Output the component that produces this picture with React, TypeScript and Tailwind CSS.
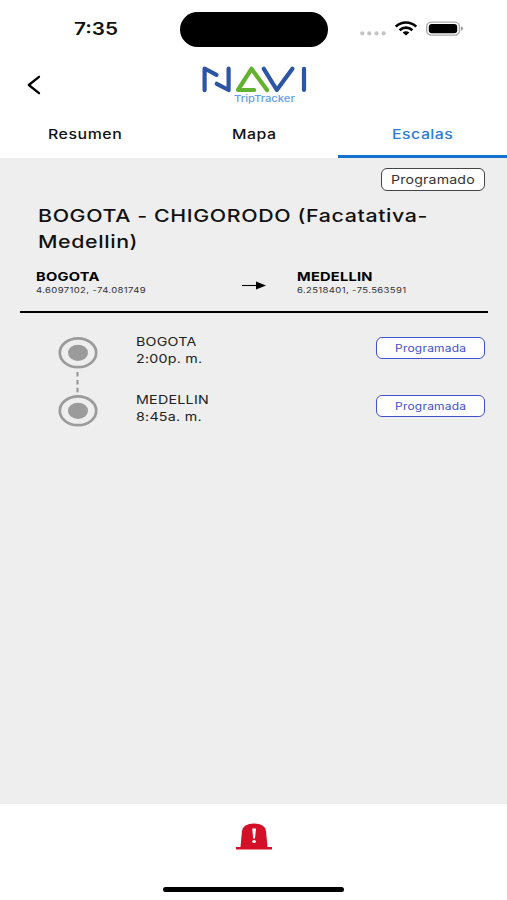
import type { ReactNode } from "react";

// Text widened horizontally, growing from its left edge.
function Wide({ className = "", children }: { className?: string; children: ReactNode }) {
  return (
    <span className={`block w-max origin-left scale-x-[1.22] whitespace-nowrap ${className}`}>
      {children}
    </span>
  );
}

function StatusBar() {
  return (
    <div className="flex h-[58px] shrink-0 items-start">
      <div className="w-[180px] pt-[19px] pl-[74px]">
        <Wide className="text-[17px] leading-5 font-semibold">7:35</Wide>
      </div>
      <div className="mt-3 h-[35px] w-[148px] rounded-full bg-black" />
      <svg className="mt-[18px] ml-[30px]" width="110" height="22" viewBox="0 0 110 22">
        <g fill="#c4c4c4">
          <circle cx="4.3" cy="15.3" r="2.1" />
          <circle cx="11.3" cy="15.3" r="2.1" />
          <circle cx="18.5" cy="15.3" r="2.1" />
          <circle cx="25.7" cy="15.3" r="2.1" />
        </g>
        <g fill="none" stroke="#000" strokeWidth="2.7">
          <path d="M37.8 8.6C43.5 3.1 52.5 3.1 58.2 8.6" />
          <path d="M41.6 12.2C45.4 8.7 50.6 8.7 54.4 12.2" />
        </g>
        <path d="M44.6 14.5C46.6 12.8 49.4 12.8 51.4 14.5L48 17.6Z" />
        <rect x="68.7" y="4.1" width="32.8" height="13" rx="4.5" fill="none" stroke="#aaa" strokeWidth="1.4" />
        <rect x="70.8" y="6" width="28.4" height="9.2" rx="3" />
        <path d="M103 8.4Q105 9 105 10.6T103 12.8Z" fill="#999" />
      </svg>
    </div>
  );
}

function Header() {
  return (
    <div className="flex h-[52px] shrink-0 items-start">
      <svg className="mt-[16px] ml-[26px]" width="16" height="22" viewBox="0 0 16 22">
        <path d="M13 2.8L2.8 11L13 19.2" fill="none" stroke="#000" strokeWidth="2.3" strokeLinecap="round" strokeLinejoin="round" />
      </svg>
      <div className="ml-[160px] pt-[7px]">
        <svg width="106" height="28" viewBox="0 0 106 28" fill="none" strokeWidth="4.2" strokeLinecap="round" strokeLinejoin="round">
          <path d="M2.6 25.2V3.5L14.5 9.8M14.8 18.8L26.6 25V3.5" stroke="#2d55a5" />
          <path d="M61.8 3.8L74.8 25L90.4 3.8M102 3.8V25" stroke="#2d55a5" />
          <path d="M52.2 25H36L49.5 3.8L65 25" stroke="#62b22f" />
        </svg>
        <Wide className="ml-8 text-[9.2px] leading-[13px] font-medium -mt-px text-[#5c9ff0]">TripTracker</Wide>
      </div>
    </div>
  );
}

function Tabs() {
  return (
    <div className="grid h-[48px] shrink-0 grid-cols-3 text-[13px] leading-5 font-medium">
      <div className="pt-[14px] pl-[48px]">
        <Wide className="tracking-[0.45px]">Resumen</Wide>
      </div>
      <div className="pt-[14px] pl-[63px]">
        <Wide className="tracking-[0.4px]">Mapa</Wide>
      </div>
      <div className="border-b-[3px] border-[#1672ce] pt-[14px] pl-[54px] text-[#2d7dd6]">
        <Wide className="tracking-[0.4px]">Escalas</Wide>
      </div>
    </div>
  );
}

function Place({ name, coords }: { name: string; coords: string }) {
  return (
    <div>
      <Wide className="text-[12px] leading-4 font-bold tracking-[0.2px] text-black">{name}</Wide>
      <Wide className="text-[7.8px] leading-[11px] tracking-[0.3px] text-[#333]">{coords}</Wide>
    </div>
  );
}

function StopMarker() {
  return (
    <svg className="block" width="40" height="33" viewBox="0 0 40 33">
      <ellipse cx="20" cy="15.8" rx="18.2" ry="14.4" fill="none" stroke="#9b9b9b" strokeWidth="2.7" />
      <ellipse cx="20" cy="15.8" rx="10" ry="8.1" fill="#9b9b9b" />
    </svg>
  );
}

function Stop({ name, time }: { name: string; time: string }) {
  return (
    <div className="flex h-[33px] items-start">
      <StopMarker />
      <div className="ml-[38px] w-[240px] text-[11.7px] leading-[17px] tracking-[0.2px] text-[#222]">
        <Wide className="-mt-[3px]">{name}</Wide>
        <Wide>{time}</Wide>
      </div>
      <div className="h-[22px] w-[109px] rounded-[6px] border-[1.5px] border-[#4150cc] bg-white pl-[18px]">
        <Wide className="text-[9.8px] leading-[22px] tracking-[0.2px] text-[#4150cc]">Programada</Wide>
      </div>
    </div>
  );
}

export default function App() {
  return (
    <div className="flex h-[900px] w-[507px] flex-col overflow-hidden bg-white font-['Inter','Liberation_Sans',sans-serif] text-[#111]">
      <StatusBar />
      <Header />
      <Tabs />
      <main className="flex h-[646px] shrink-0 flex-col bg-[#eee]">
        <div className="mt-[10px] ml-[381px] h-[23px] w-[104px] rounded-[6px] border-[1.5px] border-[#444] bg-white pl-[9px]">
          <Wide className="text-[11.6px] leading-[23px] tracking-[0.15px] text-[#333]">Programado</Wide>
        </div>
        <div className="mt-[12px] ml-[38px] text-[17.5px] leading-[26px] font-medium tracking-[0.5px]">
          <Wide>BOGOTA - CHIGORODO (Facatativa-</Wide>
          <Wide>Medellin)</Wide>
        </div>
        <div className="mr-[19px] ml-5 mt-[14px] flex h-[44px] border-b-2 border-black pl-4">
          <div className="w-[205px]">
            <Place name="BOGOTA" coords="4.6097102, -74.081749" />
          </div>
          <svg className="mt-[12px] mr-[31px]" width="25" height="10" viewBox="0 0 25 10">
            <path d="M1 4.5H16" stroke="#000" strokeWidth="1.1" />
            <path d="M15 0.4L25 4.5L15 8.6Z" />
          </svg>
          <Place name="MEDELLIN" coords="6.2518401, -75.563591" />
        </div>
        <div className="mt-[24px] ml-[58px]">
          <Stop name="BOGOTA" time="2:00p. m." />
          <svg className="ml-[18px] block" width="4" height="25" viewBox="0 0 4 25">
            <path d="M1.5 2V23" stroke="#9b9b9b" strokeWidth="2.2" strokeDasharray="4.5 3.4" />
          </svg>
          <Stop name="MEDELLIN" time="8:45a. m." />
        </div>
      </main>
      <footer className="flex h-[96px] shrink-0 flex-col items-center">
        <svg className="mt-[19px]" width="38" height="27" viewBox="0 0 38 27">
          <path d="M5.5 24L7 8Q8 1 19 0.6Q30 1 31 8L32.5 24H37V26.4H1V24Z" fill="#d31027" />
          <path d="M17.2 5.5H21L20 15.5H18.2Z" fill="#fff" />
          <ellipse cx="19.1" cy="18.6" rx="1.9" ry="1.5" fill="#fff" />
        </svg>
        <div className="mt-[37px] h-[5px] w-[181px] rounded-full bg-black" />
      </footer>
    </div>
  );
}
